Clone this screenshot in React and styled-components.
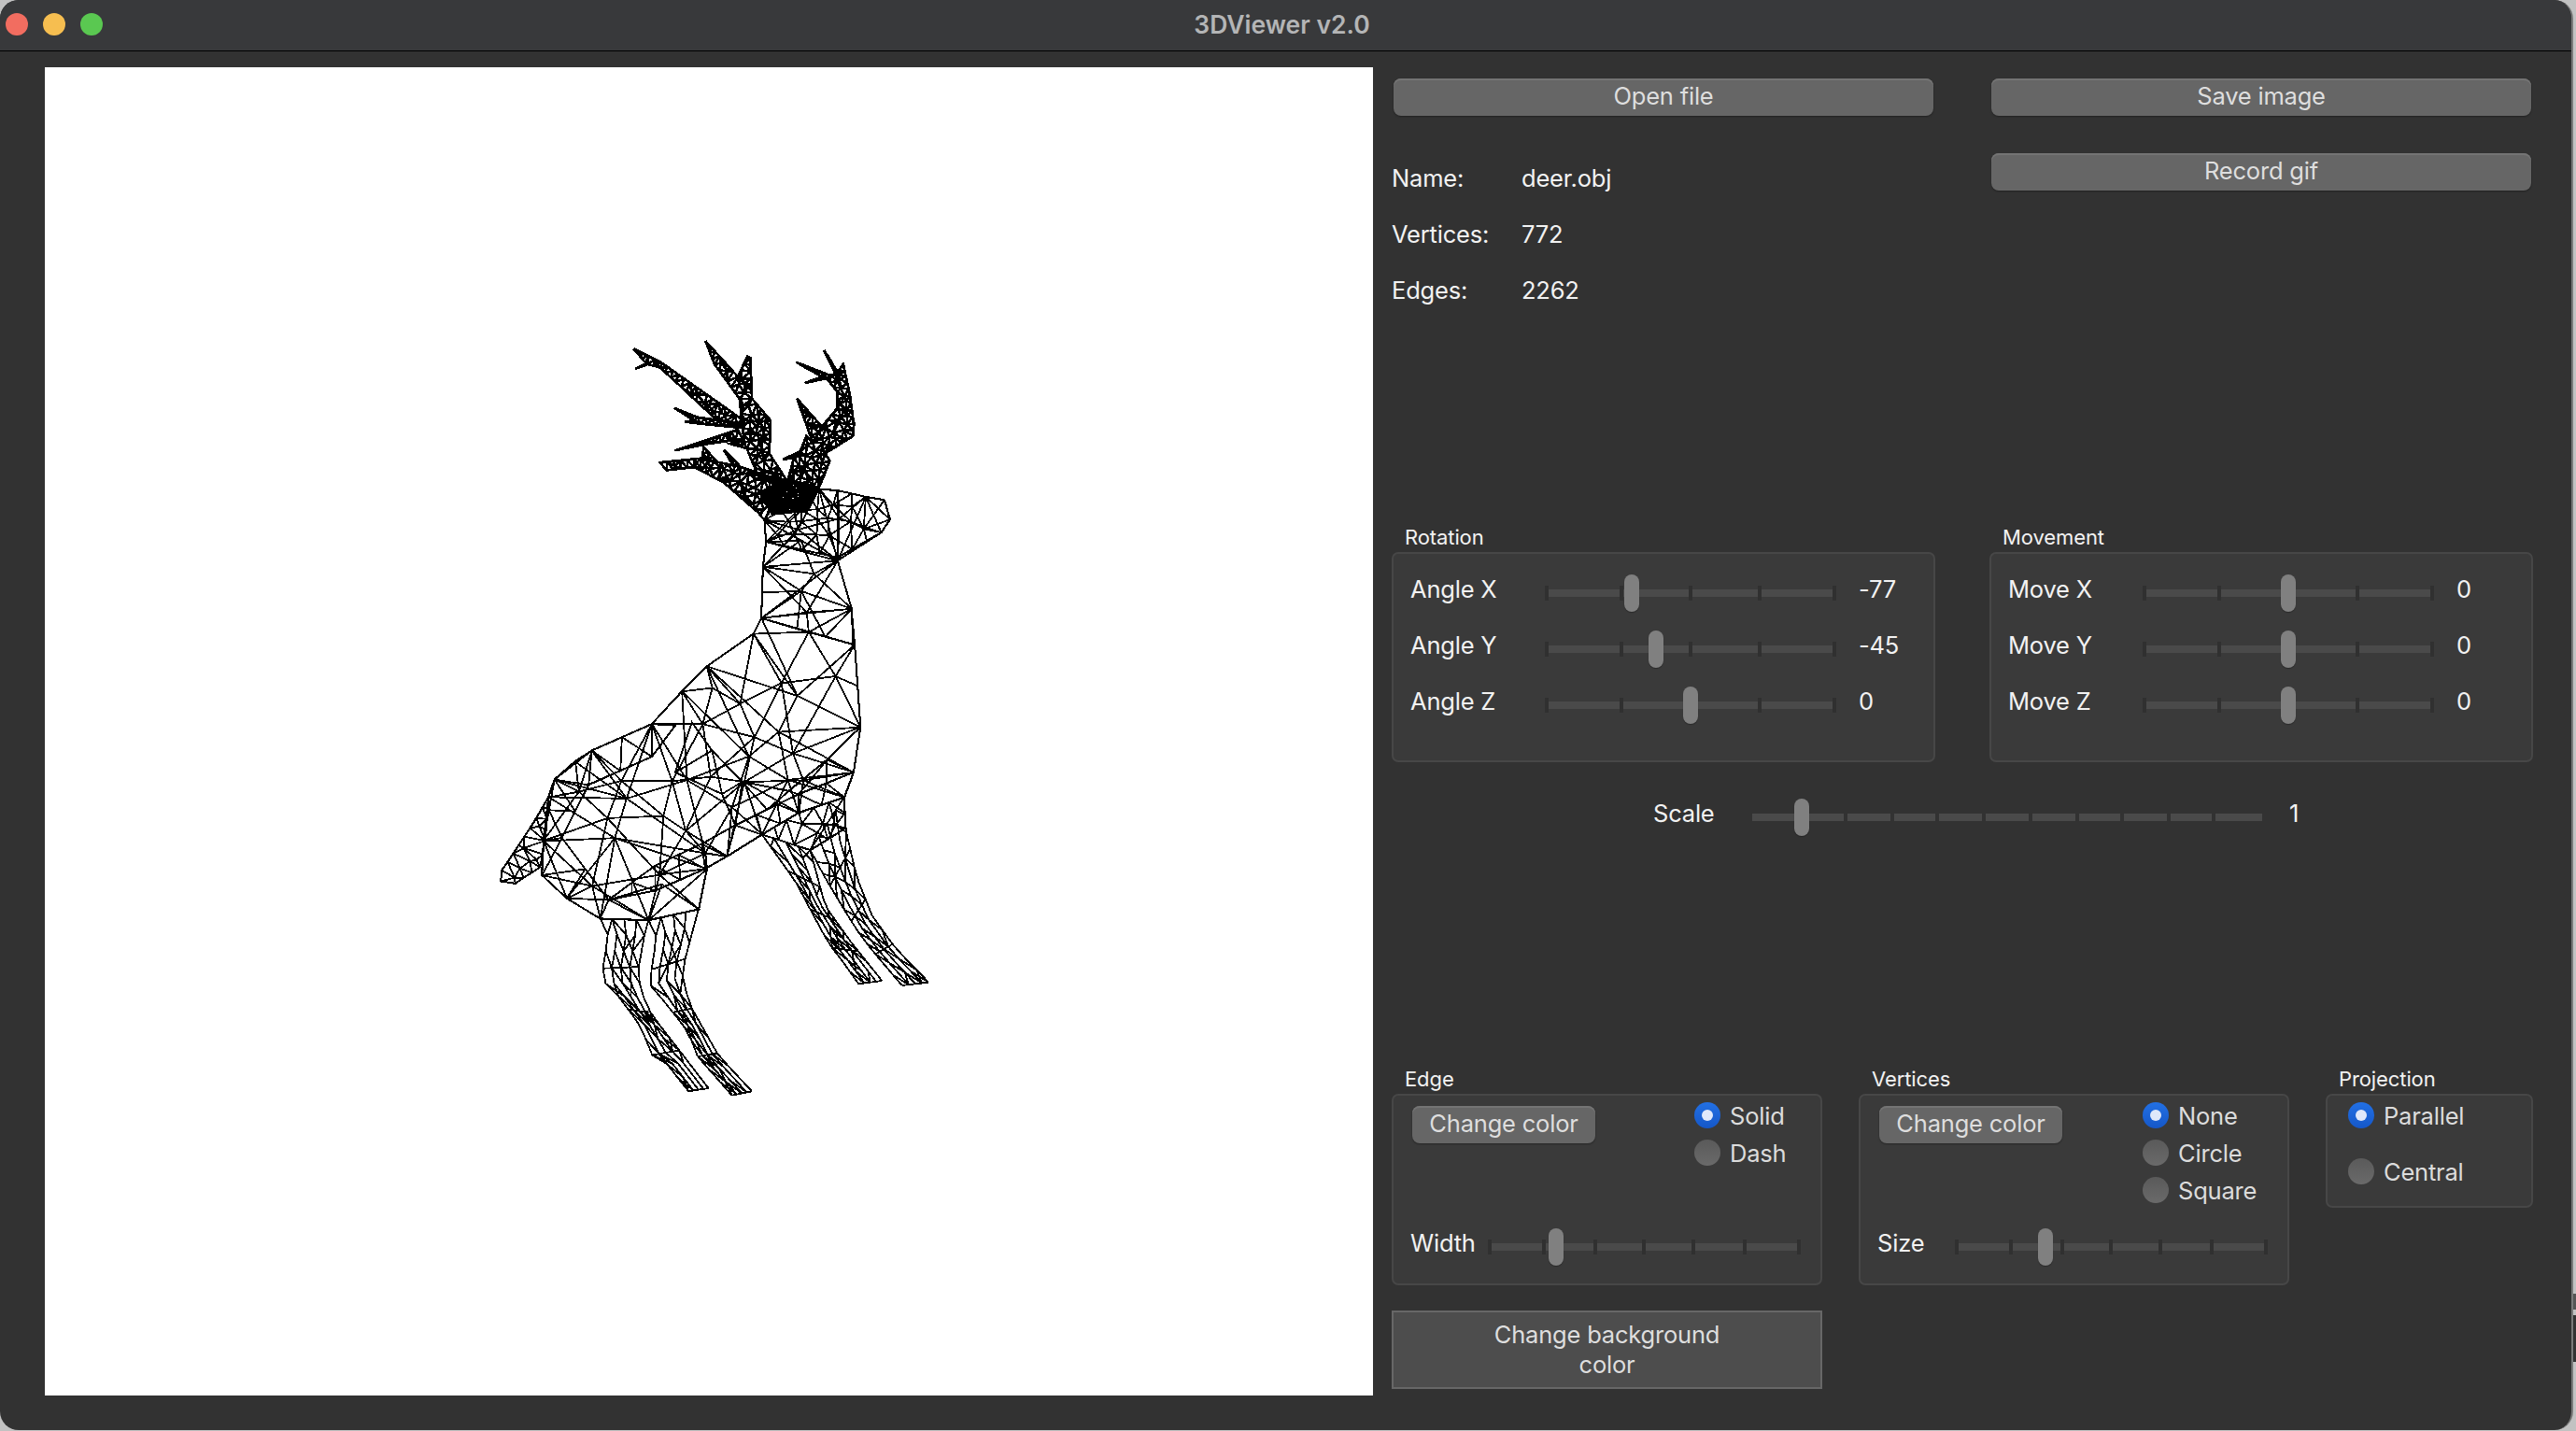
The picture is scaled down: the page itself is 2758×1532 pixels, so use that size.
import React from "react";
import styled, { createGlobalStyle } from "styled-components";

const GlobalStyle = createGlobalStyle`
  html, body {
    margin: 0;
    padding: 0;
    width: 2758px;
    height: 1532px;
    overflow: hidden;
    background: linear-gradient(to bottom, #c2c2c2 0, #c2c2c2 1385px, #555 1385px, #555 1402px, #c2c2c2 1402px, #c2c2c2 1408px, #333 1408px, #333 1458px, #c2c2c2 1458px);
    font-family: Inter, "Liberation Sans", sans-serif;
  }
  * {
    box-sizing: border-box;
  }
`;

const Window = styled.div`
  width: 2755px;
  height: 1531px;
  display: flex;
  flex-direction: column;
  background: #323232;
  border-right: 2px solid #7a7a7a;
  border-radius: 20px;
  overflow: hidden;
`;

const TitleBar = styled.div`
  height: 55px;
  flex: none;
  display: grid;
  grid-template-columns: 1fr auto 1fr;
  align-items: center;
  padding: 0 14px 3px 6px;
  background: #38393b;
  border-bottom: 1px solid #000;
`;

const Lights = styled.div`
  display: flex;
  gap: 16px;
`;

const Light = styled.span`
  width: 24px;
  height: 24px;
  border-radius: 50%;
  background: ${(p) => p.$color};
`;

const Title = styled.div`
  font-size: 26.5px;
  font-weight: 600;
  color: #b4b5b6;
`;

const Content = styled.div`
  flex: 1;
  display: flex;
  padding: 17px 0 0 48px;
`;

const Canvas = styled.div`
  width: 1422px;
  height: 1422px;
  flex: none;
  background: #fff;
`;

const DeerSvg = styled.svg`
  display: block;
  width: 100%;
  height: 100%;
`;

const Panel = styled.div`
  width: 1222px;
  margin-left: 20px;
  padding-top: 12px;
  display: flex;
  flex-direction: column;
  color: #f2f2f2;
  font-size: 25.5px;
  letter-spacing: -0.2px;
`;

const TopGrid = styled.div`
  display: grid;
  grid-template-columns: 582px 582px;
  column-gap: 58px;
`;

const TopColumn = styled.div`
  display: flex;
  flex-direction: column;
`;

const PushButton = styled.button`
  height: 40px;
  margin: 0 ${(p) => p.$inset || 0}px ${(p) => p.$below || 0}px;
  padding: 0 0 3px;
  border: none;
  border-radius: 8px;
  background: #666;
  box-shadow: inset 0 2px 0 #747474, 0 1px 2px rgba(0, 0, 0, 0.35);
  color: #dedede;
  font: inherit;
  letter-spacing: inherit;
`;

const SmallButton = styled(PushButton)`
  width: 196px;
  margin: 11px 0 0;
  flex: none;
`;

const InfoRow = styled.div`
  height: 60px;
  display: flex;
  align-items: center;
`;

const InfoLabel = styled.span`
  width: 139px;
`;

const GroupsRow = styled.div`
  display: flex;
  gap: ${(p) => p.$gap}px;
  margin-top: ${(p) => p.$top}px;
  align-items: flex-start;
`;

const Group = styled.div`
  width: ${(p) => p.$width}px;
  flex: none;
`;

const GroupTitle = styled.div`
  height: 28px;
  padding-left: 14px;
  font-size: 22px;
  line-height: 24px;
  letter-spacing: -0.1px;
`;

const GroupBox = styled.div`
  border: 2px solid #474747;
  border-radius: 7px;
  background: #3a3a3a;
  padding: ${(p) => p.$pad};
`;

const SliderRows = styled.div`
  display: flex;
  flex-direction: column;
  gap: 20px;
`;

const SliderLine = styled.div`
  height: 40px;
  display: flex;
  align-items: center;
`;

const SliderLabel = styled.span`
  width: ${(p) => p.$width}px;
  flex: none;
  padding-bottom: 10px;
`;

const SliderValue = styled.span`
  margin-left: ${(p) => p.$left}px;
  padding-bottom: 10px;
`;

const SliderBody = styled.div`
  position: relative;
  width: ${(p) => p.$width}px;
  height: 40px;
  flex: none;
`;

const Slot = styled.div`
  position: absolute;
  left: 0;
  right: 0;
  top: 16px;
  height: 8px;
  background: #4a4a4a;
`;

const Tick = styled.div`
  position: absolute;
  left: ${(p) => p.$x - 2}px;
  top: ${(p) => (p.$gap ? 16 : 12)}px;
  width: 4px;
  height: ${(p) => (p.$gap ? 8 : 16)}px;
  background: ${(p) => (p.$gap ? "#323232" : "#303030")};
`;

const Thumb = styled.div`
  position: absolute;
  left: ${(p) => p.$x - 8}px;
  top: 0;
  width: 16px;
  height: 40px;
  border-radius: 8px;
  background: #808080;
  box-shadow: 0 1px 1px rgba(0, 0, 0, 0.3);
`;

const ScaleLine = styled(SliderLine)`
  margin: 39px 0 0 280px;
`;

const BoxTop = styled.div`
  height: 142px;
  display: flex;
  padding-left: 2px;
`;

const RadioColumn = styled.div`
  display: flex;
  flex-direction: column;
  gap: ${(p) => p.$gap || 0}px;
  margin-left: ${(p) => p.$left}px;
  padding-top: 1px;
`;

const RadioRow = styled.div`
  height: 40px;
  display: flex;
  align-items: center;
  gap: 10px;
  color: #dcdcdc;
`;

const RadioMark = styled.span`
  width: 28px;
  height: 28px;
  border-radius: 50%;
  display: flex;
  align-items: center;
  justify-content: center;
  background: ${(p) => (p.$on ? "linear-gradient(#2270e4, #1557c8)" : "linear-gradient(#5a5a5a, #6a6a6a)")};
  &::after {
    content: "";
    display: ${(p) => (p.$on ? "block" : "none")};
    width: 12px;
    height: 12px;
    border-radius: 50%;
    background: #dfe8fa;
  }
`;

const WideButton = styled.button`
  width: 461px;
  height: 84px;
  margin-top: 27px;
  padding: 0 90px;
  border: 2px solid #676767;
  background: #4d4d4d;
  color: #dedede;
  font: inherit;
  letter-spacing: inherit;
  line-height: 32px;
`;

// small seeded generator so the mesh is the same on every load
const makeRandom = (seed) => {
  let s = seed;
  return () => {
    s = (s * 16807) % 2147483647;
    return s / 2147483647;
  };
};

const inside = (pt, poly) => {
  let hit = false;
  for (let i = 0, j = poly.length - 1; i < poly.length; j = i++) {
    const [xi, yi] = poly[i];
    const [xj, yj] = poly[j];
    if (yi > pt[1] !== yj > pt[1] && pt[0] < ((xj - xi) * (pt[1] - yi)) / (yj - yi) + xi) hit = !hit;
  }
  return hit;
};

const segDist = (p, a, b) => {
  const dx = b[0] - a[0];
  const dy = b[1] - a[1];
  const t = Math.max(0, Math.min(1, ((p[0] - a[0]) * dx + (p[1] - a[1]) * dy) / (dx * dx + dy * dy || 1)));
  return Math.hypot(p[0] - a[0] - t * dx, p[1] - a[1] - t * dy);
};

const triangulate = (pts) => {
  const all = [...pts, [-5000, -5000], [9000, -5000], [2000, 9000]];
  const n = pts.length;
  let tris = [[n, n + 1, n + 2]];
  const inCircle = (t, p) => {
    const [ax, ay] = all[t[0]];
    const [bx, by] = all[t[1]];
    const [cx, cy] = all[t[2]];
    const d = 2 * (ax * (by - cy) + bx * (cy - ay) + cx * (ay - by));
    if (d === 0) return false;
    const a2 = ax * ax + ay * ay;
    const b2 = bx * bx + by * by;
    const c2 = cx * cx + cy * cy;
    const ux = (a2 * (by - cy) + b2 * (cy - ay) + c2 * (ay - by)) / d;
    const uy = (a2 * (cx - bx) + b2 * (ax - cx) + c2 * (bx - ax)) / d;
    return Math.hypot(p[0] - ux, p[1] - uy) < Math.hypot(ax - ux, ay - uy);
  };
  pts.forEach((p, i) => {
    const bad = [];
    const keep = [];
    tris.forEach((t) => (inCircle(t, p) ? bad : keep).push(t));
    const count = {};
    bad.forEach((t) => {
      [[t[0], t[1]], [t[1], t[2]], [t[2], t[0]]].forEach(([a, b]) => {
        const k = a < b ? `${a}_${b}` : `${b}_${a}`;
        count[k] = (count[k] || 0) + 1;
      });
    });
    Object.keys(count).forEach((k) => {
      if (count[k] === 1) {
        const [a, b] = k.split("_").map(Number);
        keep.push([a, b, i]);
      }
    });
    tris = keep;
  });
  return tris.filter((t) => t.every((v) => v < n));
};

const line = (a, b) => `M${a[0].toFixed(1)} ${a[1].toFixed(1)}L${b[0].toFixed(1)} ${b[1].toFixed(1)}`;

const meshPath = (poly, spacing, seed) => {
  const rnd = makeRandom(seed);
  const pts = [];
  poly.forEach((a, i) => {
    const b = poly[(i + 1) % poly.length];
    const steps = Math.max(1, Math.round(Math.hypot(b[0] - a[0], b[1] - a[1]) / spacing));
    for (let k = 0; k < steps; k++) {
      pts.push([a[0] + ((b[0] - a[0]) * k) / steps + rnd() * 0.4, a[1] + ((b[1] - a[1]) * k) / steps + rnd() * 0.4]);
    }
  });
  const xs = poly.map((p) => p[0]);
  const ys = poly.map((p) => p[1]);
  for (let x = Math.min(...xs); x < Math.max(...xs); x += spacing) {
    for (let y = Math.min(...ys); y < Math.max(...ys); y += spacing) {
      const p = [x + rnd() * spacing * 0.8, y + rnd() * spacing * 0.8];
      if (!inside(p, poly)) continue;
      const near = poly.some((a, i) => segDist(p, a, poly[(i + 1) % poly.length]) < spacing * 0.4);
      if (!near) pts.push(p);
    }
  }
  const edges = new Set();
  let d = "";
  triangulate(pts).forEach((t) => {
    const c = [(pts[t[0]][0] + pts[t[1]][0] + pts[t[2]][0]) / 3, (pts[t[0]][1] + pts[t[1]][1] + pts[t[2]][1]) / 3];
    if (!inside(c, poly)) return;
    [[t[0], t[1]], [t[1], t[2]], [t[2], t[0]]].forEach(([a, b]) => {
      const k = a < b ? `${a}_${b}` : `${b}_${a}`;
      if (edges.has(k)) return;
      edges.add(k);
      d += line(pts[a], pts[b]);
    });
  });
  d += "M" + poly.map((p) => `${p[0].toFixed(1)} ${p[1].toFixed(1)}`).join("L") + "Z";
  return d;
};

const resample = (chain, n) => {
  const lens = chain.slice(1).map((p, i) => Math.hypot(p[0] - chain[i][0], p[1] - chain[i][1]));
  const total = lens.reduce((a, b) => a + b, 0);
  const out = [];
  for (let i = 0; i <= n; i++) {
    let d = (total * i) / n;
    let s = 0;
    while (s < lens.length - 1 && d > lens[s]) {
      d -= lens[s];
      s++;
    }
    const t = lens[s] ? d / lens[s] : 0;
    out.push([chain[s][0] + (chain[s + 1][0] - chain[s][0]) * t, chain[s][1] + (chain[s + 1][1] - chain[s][1]) * t]);
  }
  return out;
};

// legs are mostly long strands running down the limb, tied by a few cross edges
const legPath = (left, right, seed) => {
  const rnd = makeRandom(seed);
  const n = 12;
  const a = resample(left, n);
  const b = resample(right, n);
  const strands = 4;
  const at = (i, k) => {
    const t = k / strands;
    return [a[i][0] + (b[i][0] - a[i][0]) * t, a[i][1] + (b[i][1] - a[i][1]) * t];
  };
  let d = "";
  for (let k = 0; k <= strands; k++) {
    for (let i = 0; i < n; i++) d += line(at(i, k), at(i + 1, k));
  }
  for (let i = 0; i < n; i++) {
    for (let k = 0; k < strands; k++) {
      if (rnd() > 0.45) d += line(at(i, k), at(i + 1, k + 1));
      if (rnd() > 0.75) d += line(at(i, k + 1), at(i + 1, k));
    }
    if (i % 3 === 0) d += line(at(i, 0), at(i, strands));
  }
  // closes the hoof
  d += line(at(n, 0), at(n, strands));
  return d;
};

// outlines traced off the two crops of the reference
const upper = (list) => list.map(([x, y]) => [480 + x / 3, 340 + y / 3]);
const lower = (list) => list.map(([x, y]) => [480 + x / 2.8, 740 + y / 3]);

const torso = [
  ...upper([[1000, 635], [1015, 650], [1020, 720], [1010, 800], [1005, 965], [980, 1015], [830, 1120], [750, 1200]]),
  ...lower([[610, 105], [430, 190], [380, 225], [318, 283], [300, 340], [285, 480], [280, 590], [355, 665], [455, 730], [600, 735], [750, 700], [775, 570], [770, 520], [835, 530], [940, 460], [1050, 390], [1187, 340], [1215, 260], [1235, 115]]),
  ...upper([[1305, 1050], [1295, 935], [1250, 780], [1390, 690], [1418, 648], [1400, 585], [1340, 575], [1250, 555], [1190, 550], [1090, 530]]),
];

const rump = lower([[430, 190], [318, 283], [285, 480], [280, 590], [355, 665], [455, 730], [600, 735], [750, 700], [640, 620], [480, 670], [340, 470], [420, 300], [610, 210], [680, 110], [610, 105]]);
const belly = lower([[480, 670], [620, 640], [770, 570], [835, 530], [940, 460], [1050, 390], [1187, 340], [1215, 260], [1050, 330], [860, 430], [760, 490], [620, 560]]);
const shoulder = lower([[730, 100], [680, 260], [820, 330], [860, 430], [1050, 330], [1215, 260], [1235, 115], [1135, 220], [1020, 320], [880, 290], [790, 190]]);
const neck = upper([[1015, 650], [1020, 720], [1010, 800], [1005, 965], [1120, 1000], [1300, 1050], [1295, 935], [1250, 780]]);
const head = upper([[1015, 650], [1020, 720], [1250, 770], [1390, 690], [1418, 648], [1400, 585], [1340, 575], [1250, 555], [1190, 550], [1090, 530], [1000, 630]]);
const tail = lower([[300, 340], [245, 440], [160, 575], [157, 610], [200, 617], [275, 565], [290, 480]]);
const hip = lower([[940, 460], [1085, 510], [1190, 440], [1187, 340], [1050, 390]]);

const legs = [
  {
    left: [[455, 730], [480, 785], [458, 925], [515, 985], [585, 1090], [605, 1165], [650, 1190], [720, 1285]],
    right: [[600, 735], [590, 770], [570, 890], [575, 960], [610, 1040], [690, 1150], [780, 1275]],
  },
  {
    left: [[600, 735], [625, 790], [602, 940], [650, 1000], [720, 1095], [745, 1170], [850, 1298]],
    right: [[750, 700], [700, 900], [720, 1000], [810, 1170], [910, 1285]],
  },
  {
    left: [[940, 460], [1040, 610], [1140, 810], [1170, 850], [1230, 940]],
    right: [[1085, 510], [1130, 690], [1210, 810], [1300, 930]],
  },
  {
    left: [[1085, 510], [1130, 600], [1220, 760], [1265, 825], [1360, 945]],
    right: [[1187, 340], [1190, 440], [1225, 600], [1270, 720], [1340, 825], [1440, 935]],
  },
].map((leg) => ({ left: lower(leg.left), right: lower(leg.right) }));

const antlers = [
  [[595, 100], [685, 145], [940, 325], [950, 350], [880, 345], [680, 160], [640, 150], [600, 165], [635, 147]],
  [[826, 75], [930, 190], [960, 125], [970, 130], [975, 260], [1035, 330], [1030, 435], [1085, 520], [1000, 520], [950, 400], [935, 260], [855, 150]],
  [[725, 290], [800, 320], [940, 340], [950, 355], [760, 335], [790, 330]],
  [[727, 427], [930, 360], [945, 390], [830, 405]],
  [[680, 465], [810, 452], [940, 480], [1060, 520], [1090, 530], [1040, 590], [1000, 630], [885, 530], [790, 480], [700, 490]],
  [[885, 425], [930, 470], [915, 475]],
  [[820, 415], [860, 460], [815, 458]],
  [[905, 405], [945, 395], [960, 420]],
  [[1207, 105], [1250, 175], [1268, 150], [1290, 250], [1302, 340], [1300, 380], [1210, 435], [1225, 460], [1190, 545], [1090, 525], [1110, 450], [1075, 455], [1130, 430], [1150, 380], [1170, 400], [1200, 350], [1250, 290], [1250, 240], [1215, 195], [1145, 210], [1200, 190], [1117, 143], [1225, 185], [1245, 185]],
  [[1120, 260], [1200, 350], [1170, 400]],
].map(upper);

const antlerRoot = upper([[1000, 560], [1100, 520], [1190, 550], [1150, 620], [1040, 630]]);

const bodyPath = [
  meshPath(torso, 50, 11),
  meshPath(torso, 62, 29),
  meshPath(rump, 40, 47),
  meshPath(belly, 30, 53),
  meshPath(shoulder, 40, 61),
  meshPath(neck, 36, 37),
  meshPath(head, 18, 67),
  meshPath(tail, 12, 71),
  meshPath(hip, 18, 79),
  ...legs.map((leg, i) => legPath(leg.left, leg.right, 83 + i * 7)),
].join("");

const antlerPath = [...antlers.map((a, i) => meshPath(a, 7.5, 173 + i * 3)), meshPath(antlerRoot, 4, 211)].join("");

const Slider = ({ width, ticks, gaps, at }) => (
  <SliderBody $width={width}>
    <Slot />
    {ticks && ticks.map((x) => <Tick key={x} $x={x} />)}
    {gaps && gaps.map((x) => <Tick key={x} $x={x} $gap />)}
    <Thumb $x={at} />
  </SliderBody>
);

const axisTicks = [0, 80, 154, 228, 308];
const sizeTicks = [0, 58, 113, 165, 218, 273, 331];
const scaleGaps = [52, 100, 150, 198, 248, 298, 348, 396, 446, 494];

const AxisGroup = ({ title, rows }) => (
  <Group $width={582}>
    <GroupTitle>{title}</GroupTitle>
    <GroupBox $pad="22px 0 39px 18px">
      <SliderRows>
        {rows.map((r) => (
          <SliderLine key={r.label}>
            <SliderLabel $width={146}>{r.label}</SliderLabel>
            <Slider width={308} ticks={axisTicks} at={r.at} />
            <SliderValue $left={26}>{r.value}</SliderValue>
          </SliderLine>
        ))}
      </SliderRows>
    </GroupBox>
  </Group>
);

const Radio = ({ label, on }) => (
  <RadioRow>
    <RadioMark $on={on} />
    {label}
  </RadioRow>
);

const StyleGroup = ({ title, radios, radioLeft, sliderLabel, at }) => (
  <Group $width={461}>
    <GroupTitle>{title}</GroupTitle>
    <GroupBox $pad="0 0 19px 18px">
      <BoxTop>
        <SmallButton>Change color</SmallButton>
        <RadioColumn $left={radioLeft}>
          {radios.map((r, i) => (
            <Radio key={r} label={r} on={i === 0} />
          ))}
        </RadioColumn>
      </BoxTop>
      <SliderLine>
        <SliderLabel $width={85}>{sliderLabel}</SliderLabel>
        <Slider width={331} ticks={sizeTicks} at={at} />
      </SliderLine>
    </GroupBox>
  </Group>
);

export default function App() {
  return (
    <>
      <GlobalStyle />
      <Window>
        <TitleBar>
          <Lights>
            <Light $color="#f26d60" />
            <Light $color="#f6be50" />
            <Light $color="#5ac851" />
          </Lights>
          <Title>3DViewer v2.0</Title>
        </TitleBar>
        <Content>
          <Canvas>
            <DeerSvg viewBox="48 72 1422 1422">
              <path d={bodyPath} fill="none" stroke="#000" strokeWidth="1.8" shapeRendering="crispEdges" />
              <path d={antlerPath} fill="none" stroke="#000" strokeWidth="2.6" shapeRendering="crispEdges" />
            </DeerSvg>
          </Canvas>
          <Panel>
            <TopGrid>
              <TopColumn>
                <PushButton $inset={2} $below={36}>Open file</PushButton>
                <InfoRow><InfoLabel>Name:</InfoLabel>deer.obj</InfoRow>
                <InfoRow><InfoLabel>Vertices:</InfoLabel>772</InfoRow>
                <InfoRow><InfoLabel>Edges:</InfoLabel>2262</InfoRow>
              </TopColumn>
              <TopColumn>
                <PushButton $inset={2} $below={40}>Save image</PushButton>
                <PushButton $inset={2}>Record gif</PushButton>
              </TopColumn>
            </TopGrid>
            <GroupsRow $gap={58} $top={223}>
              <AxisGroup
                title="Rotation"
                rows={[
                  { label: "Angle X", at: 91, value: "-77" },
                  { label: "Angle Y", at: 117, value: "-45" },
                  { label: "Angle Z", at: 154, value: "0" },
                ]}
              />
              <AxisGroup
                title="Movement"
                rows={[
                  { label: "Move X", at: 154, value: "0" },
                  { label: "Move Y", at: 154, value: "0" },
                  { label: "Move Z", at: 154, value: "0" },
                ]}
              />
            </GroupsRow>
            <ScaleLine>
              <SliderLabel $width={106}>Scale</SliderLabel>
              <Slider width={546} gaps={scaleGaps} at={53} />
              <SliderValue $left={29}>1</SliderValue>
            </ScaleLine>
            <GroupsRow $gap={39} $top={248}>
              <StyleGroup title="Edge" radios={["Solid", "Dash"]} radioLeft={106} sliderLabel="Width" at={71} />
              <StyleGroup title="Vertices" radios={["None", "Circle", "Square"]} radioLeft={86} sliderLabel="Size" at={95} />
              <Group $width={222}>
                <GroupTitle>Projection</GroupTitle>
                <GroupBox $pad="0 0 17px 22px">
                  <RadioColumn $left={0} $gap={20}>
                    <Radio label="Parallel" on />
                    <Radio label="Central" />
                  </RadioColumn>
                </GroupBox>
              </Group>
            </GroupsRow>
            <WideButton>Change background color</WideButton>
          </Panel>
        </Content>
      </Window>
    </>
  );
}
